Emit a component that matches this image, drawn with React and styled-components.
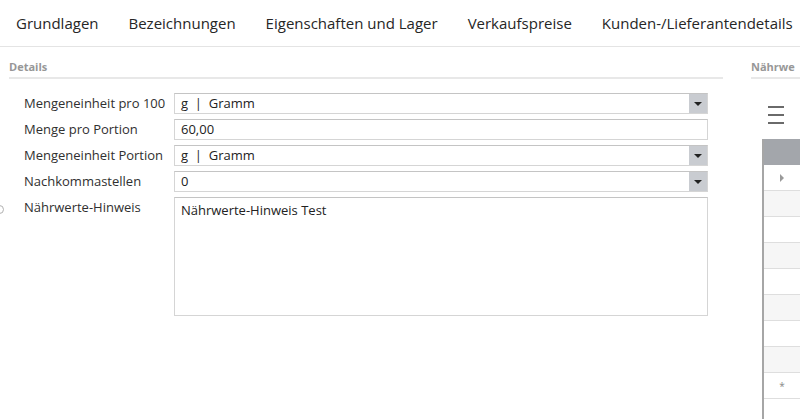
import React from "react";
import styled, { createGlobalStyle } from "styled-components";

const GlobalStyle = createGlobalStyle`
  html, body {
    margin: 0;
    padding: 0;
    background: #ffffff;
    overflow: hidden;
  }
  body {
    font-family: "Open Sans", "Noto Sans", sans-serif;
    color: #333;
  }
`;

const Page = styled.div`
  position: relative;
  width: 800px;
  height: 419px;
  overflow: hidden;
`;

const TabBar = styled.div`
  display: flex;
  align-items: center;
  height: 46px;
  padding-left: 16px;
  gap: 30px;
  border-bottom: 1px solid #e4e4e4;
  white-space: nowrap;
`;

const Tab = styled.div`
  font-size: 15px;
  color: #262626;
`;

const Main = styled.div`
  display: flex;
  align-items: flex-start;
`;

const Section = styled.div`
  flex: none;
  width: ${(p) => p.width}px;
  margin-left: ${(p) => p.offset}px;
`;

const SectionHeader = styled.div`
  height: 32px;
  box-sizing: border-box;
  padding-top: 12px;
  border-bottom: 2px solid #e8e8e8;
  font-size: 11px;
  font-weight: 700;
  color: #979797;
  white-space: nowrap;
  overflow: hidden;
`;

const Form = styled.div`
  display: grid;
  grid-template-columns: 150px 534px;
  row-gap: 5px;
  padding-left: 15px;
  margin-top: 14px;
`;

const Label = styled.div`
  font-size: 13px;
  color: #303030;
  line-height: 21px;
  white-space: nowrap;
`;

const Field = styled.div`
  display: flex;
  align-items: stretch;
  height: ${(p) => (p.tall ? 119 : 21)}px;
  box-sizing: border-box;
  border: 1px solid #d5d5d5;
  border-top-color: #c4c4c4;
  background: #fff;
`;

const Value = styled.div`
  flex: 1;
  padding: ${(p) => (p.tall ? "3px 6px" : "0 6px")};
  font-size: 13px;
  line-height: 19px;
  color: #222;
  white-space: pre;
`;

const DropButton = styled.div`
  width: 18px;
  background: #c9ccd1;
  display: flex;
  align-items: center;
  justify-content: center;
`;

const Arrow = styled.div`
  width: 0;
  height: 0;
  border-left: 4px solid transparent;
  border-right: 4px solid transparent;
  border-top: 4px solid #222;
`;

const Hamburger = styled.div`
  margin: 27px 0 0 17px;
  display: flex;
  flex-direction: column;
  gap: 6px;
  width: 16px;
  span {
    display: block;
    height: 2px;
    background: #6a6a6a;
  }
`;

const Grid = styled.div`
  margin: 15px 0 0 11px;
  height: 300px;
  border-left: 2px solid #a6a6a6;
  width: 37px;
`;

const GridHead = styled.div`
  height: 26px;
  background: #a3a6ab;
`;

const GridRow = styled.div`
  height: 26px;
  box-sizing: border-box;
  border-bottom: 1px solid #dedede;
  border-right: 1px solid #dedede;
  background: ${(p) => (p.alt ? "#f6f6f6" : "#ffffff")};
  display: flex;
  align-items: center;
  justify-content: center;
  font-size: 10px;
  color: #888;
`;

const Play = styled.div`
  width: 0;
  height: 0;
  border-top: 4px solid transparent;
  border-bottom: 4px solid transparent;
  border-left: 4px solid #9a9a9a;
`;

const Ring = styled.div`
  position: absolute;
  left: -5px;
  top: 205px;
  width: 7px;
  height: 7px;
  border: 1px solid #b0b0b0;
  border-radius: 50%;
`;

const fields = [
  { label: "Mengeneinheit pro 100", value: "g  |  Gramm", drop: true },
  { label: "Menge pro Portion", value: "60,00" },
  { label: "Mengeneinheit Portion", value: "g  |  Gramm", drop: true },
  { label: "Nachkommastellen", value: "0", drop: true },
  { label: "Nährwerte-Hinweis", value: "Nährwerte-Hinweis Test", tall: true },
];

const tabs = [
  "Grundlagen",
  "Bezeichnungen",
  "Eigenschaften und Lager",
  "Verkaufspreise",
  "Kunden-/Lieferantendetails",
];

export default function App() {
  return (
    <Page>
      <GlobalStyle />
      <TabBar>
        {tabs.map((t) => (
          <Tab key={t}>{t}</Tab>
        ))}
      </TabBar>
      <Main>
        <Section width={714} offset={9}>
          <SectionHeader>Details</SectionHeader>
          <Form>
            {fields.map((f) => (
              <React.Fragment key={f.label}>
                <Label>{f.label}</Label>
                <Field tall={f.tall}>
                  <Value tall={f.tall}>{f.value}</Value>
                  {f.drop && (
                    <DropButton>
                      <Arrow />
                    </DropButton>
                  )}
                </Field>
              </React.Fragment>
            ))}
          </Form>
        </Section>
        <Section width={49} offset={28}>
          <SectionHeader>Nährwe</SectionHeader>
          <Hamburger>
            <span />
            <span />
            <span />
          </Hamburger>
          <Grid>
            <GridHead />
            <GridRow>
              <Play />
            </GridRow>
            {[1, 2, 3, 4, 5, 6, 7].map((i) => (
              <GridRow key={i} alt={i % 2 === 1} />
            ))}
            <GridRow>*</GridRow>
          </Grid>
        </Section>
      </Main>
      <Ring />
    </Page>
  );
}
